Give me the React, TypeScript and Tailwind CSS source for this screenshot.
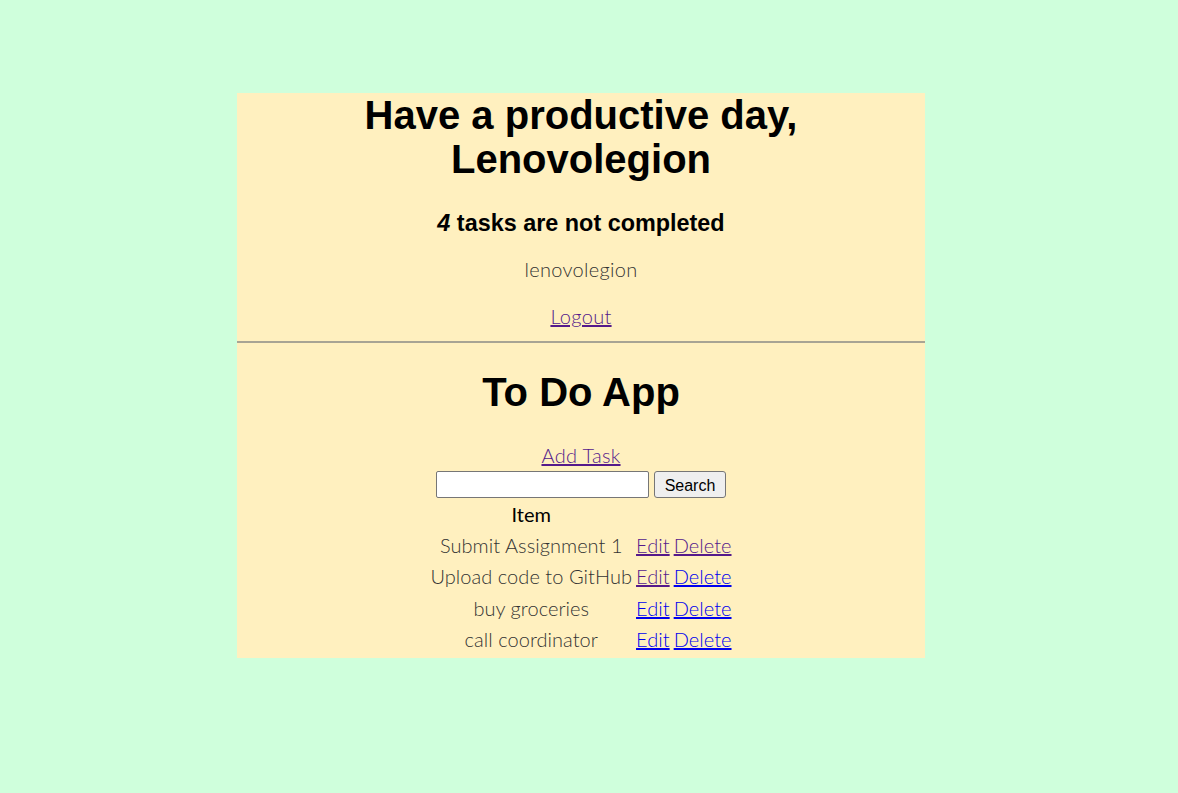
const tasks = [
  { name: "Submit Assignment 1", editSeen: true, deleteSeen: true },
  { name: "Upload code to GitHub", editSeen: true, deleteSeen: false },
  { name: "buy groceries", editSeen: false, deleteSeen: false },
  { name: "call coordinator", editSeen: false, deleteSeen: false },
];

const body = "font-['Lato',sans-serif] font-light text-[20px] leading-[27.3px] tracking-[0.3px] text-[#333]";

export default function App() {
  return (
    <div className="min-h-[793px] w-full bg-[#cfffdc] pt-[93px]">
      <div className={`ml-[237px] w-[688px] h-[565px] bg-[#fff0bf] text-center ${body}`}>
        {/* Greeting */}
        <h1 className="font-['Liberation_Sans',Arial,sans-serif] font-bold text-[40px] leading-[44px] tracking-normal text-black">
          Have a productive day,
          <br />
          Lenovolegion
        </h1>
        <h3 className="mt-[29px] font-['Liberation_Sans',Arial,sans-serif] font-bold text-[23.4px] leading-[27px] tracking-normal text-black">
          <em>4</em> tasks are not completed
        </h3>
        <p className="mt-[19px]">lenovolegion</p>
        <p className="mt-[20px]">
          <a href="#" className="underline text-[#551a8b]">
            Logout
          </a>
        </p>
        <div className="mt-[10px] border-t-2 border-[#a8a494]" />

        {/* App */}
        <h1 className="mt-[26px] font-['Liberation_Sans',Arial,sans-serif] font-bold text-[40px] leading-[46px] tracking-normal text-black">
          To Do App
        </h1>
        <div className="mt-[27px]">
          <a href="#" className="underline text-[#551a8b]">
            Add Task
          </a>
        </div>
        <form className="mt-[2px] flex justify-center gap-[5px]" onSubmit={(e) => e.preventDefault()}>
          <input
            type="text"
            className="w-[213px] h-[27px] bg-white border border-[#767676] rounded-[2px] px-1 text-[13px] tracking-normal font-['Liberation_Sans',Arial,sans-serif]"
          />
          <button
            type="submit"
            className="w-[72px] h-[27px] bg-[#efefef] border border-[#767676] rounded-[3px] text-[16px] tracking-normal font-['Liberation_Sans',Arial,sans-serif] font-normal text-black"
          >
            Search
          </button>
        </form>
        <table className="mx-auto border-separate border-spacing-[2px] tracking-[0.05px]">
          <thead>
            <tr>
              <th className="w-[201px] p-px font-normal text-black">Item</th>
              <th className="p-px" />
              <th className="p-px" />
            </tr>
          </thead>
          <tbody>
            {tasks.map((t) => (
              <tr key={t.name}>
                <td className="p-px text-center whitespace-nowrap">{t.name}</td>
                <td className="p-px">
                  <a href="#" className={`underline ${t.editSeen ? "text-[#551a8b]" : "text-[#0000ee]"}`}>
                    Edit
                  </a>
                </td>
                <td className="p-px">
                  <a href="#" className={`underline ${t.deleteSeen ? "text-[#551a8b]" : "text-[#0000ee]"}`}>
                    Delete
                  </a>
                </td>
              </tr>
            ))}
          </tbody>
        </table>
      </div>
    </div>
  );
}
